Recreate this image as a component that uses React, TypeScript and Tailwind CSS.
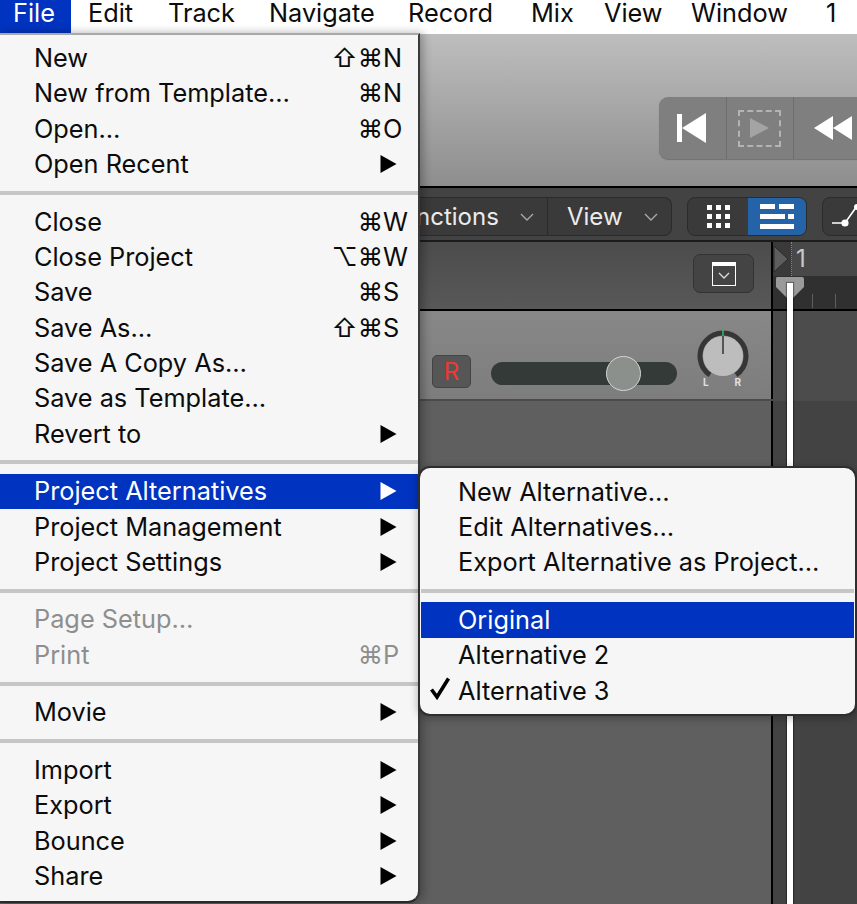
import React from "react";

type Item =
  | { sep: true }
  | { label: string; mods?: string; k?: string; arrow?: boolean; on?: boolean; off?: boolean; check?: boolean };

const menuBar = [
  { label: "File", cls: "w-[71px] bg-[#0033bf] pl-[13px] text-white" },
  { label: "Edit", cls: "w-[80px] pl-[17px]" },
  { label: "Track", cls: "w-[101px] pl-[17px]" },
  { label: "Navigate", cls: "w-[139px] pl-[17px]" },
  { label: "Record", cls: "w-[123px] pl-[17px]" },
  { label: "Mix", cls: "w-[73px] pl-[17px]" },
  { label: "View", cls: "w-[87px] pl-[17px]" },
  { label: "Window", cls: "w-[135px] pl-[17px]" },
  { label: "1", cls: "w-[48px] pl-[17px]" },
];

const fileMenu: Item[] = [
  { label: "New", mods: "⇧⌘", k: "N" },
  { label: "New from Template…", mods: "⌘", k: "N" },
  { label: "Open…", mods: "⌘", k: "O" },
  { label: "Open Recent", arrow: true },
  { sep: true },
  { label: "Close", mods: "⌘", k: "W" },
  { label: "Close Project", mods: "⌥⌘", k: "W" },
  { label: "Save", mods: "⌘", k: "S" },
  { label: "Save As…", mods: "⇧⌘", k: "S" },
  { label: "Save A Copy As…" },
  { label: "Save as Template…" },
  { label: "Revert to", arrow: true },
  { sep: true },
  { label: "Project Alternatives", arrow: true, on: true },
  { label: "Project Management", arrow: true },
  { label: "Project Settings", arrow: true },
  { sep: true },
  { label: "Page Setup…", off: true },
  { label: "Print", mods: "⌘", k: "P", off: true },
  { sep: true },
  { label: "Movie", arrow: true },
  { sep: true },
  { label: "Import", arrow: true },
  { label: "Export", arrow: true },
  { label: "Bounce", arrow: true },
  { label: "Share", arrow: true },
];

const subMenu: Item[] = [
  { label: "New Alternative…" },
  { label: "Edit Alternatives…" },
  { label: "Export Alternative as Project…" },
  { sep: true },
  { label: "Original", on: true },
  { label: "Alternative 2" },
  { label: "Alternative 3", check: true },
];

function Arrow({ white }: { white?: boolean }) {
  return (
    <svg width="17" height="18" viewBox="0 0 17 18" className="mr-[20px] shrink-0">
      <polygon points="0.5,0 16.5,9 0.5,18" fill={white ? "#ffffff" : "#000000"} />
    </svg>
  );
}

function MainRow({ item }: { item: Exclude<Item, { sep: true }> }) {
  const color = item.on ? "bg-[#0033bf] text-white" : item.off ? "text-[#8e8e8e]" : "text-[#0c0c0c]";
  return (
    <div className={`flex h-[35.33px] items-center pl-[34px] pr-[1px] ${color}`}>
      <span className="flex-1 whitespace-nowrap">{item.label}</span>
      {item.k && (
        <span className="flex items-center">
          <span className="whitespace-nowrap">{item.mods}</span>
          <span className="w-[34px]">{item.k}</span>
        </span>
      )}
      {item.arrow && <Arrow white={item.on} />}
    </div>
  );
}

function Separator() {
  return (
    <div className="flex h-[22.27px] items-center">
      <div className="h-[4px] w-full bg-[#c6c6c6]" />
    </div>
  );
}

function SubRow({ item }: { item: Exclude<Item, { sep: true }> }) {
  return (
    <div
      className={`relative flex h-[35.33px] items-center pl-[37px] ${
        item.on ? "bg-[#0033bf] text-white" : "text-[#0c0c0c]"
      }`}
    >
      {item.check && (
        <svg width="22" height="24" viewBox="0 0 22 24" className="absolute left-[8px] top-[3px]">
          <path d="M2.5 13.5 L8 21 L19.5 2.5" fill="none" stroke="#000" strokeWidth="3.6" />
        </svg>
      )}
      <span className="whitespace-nowrap">{item.label}</span>
    </div>
  );
}

function Chevron() {
  return (
    <svg width="14" height="8" viewBox="0 0 14 8">
      <path d="M1 1 L7 7 L13 1" fill="none" stroke="#a8a8a8" strokeWidth="1.4" />
    </svg>
  );
}

function TransportButton({ children, last }: { children: React.ReactNode; last?: boolean }) {
  return (
    <div
      className={`flex shrink-0 items-center ${
        last ? "w-[76px] pl-[20px]" : "w-[67.5px] justify-center border-r border-[#6e6e6e]"
      }`}
    >
      {children}
    </div>
  );
}

export default function App() {
  return (
    <div className="relative h-[904px] w-[857px] overflow-hidden bg-[#5e5e5e] text-[25.3px] [font-family:Inter,'DejaVu_Sans',sans-serif]">
      {/* Menu bar */}
      <div className="flex h-[34px] items-center bg-white text-[#0c0c0c]">
        {menuBar.map((m) => (
          <div
            key={m.label}
            className={`flex h-full shrink-0 items-center whitespace-nowrap pb-[8px] leading-[26px] ${m.cls}`}
          >
            {m.label}
          </div>
        ))}
      </div>

      {/* Application window behind the menus */}
      <div className="ml-[420px] flex h-[870px] flex-col text-white">
        {/* Control bar */}
        <div className="flex h-[154px] shrink-0 items-start overflow-hidden border-b-2 border-black bg-gradient-to-b from-[#bebebe] to-[#8e8e8e] pl-[239px] pt-[63px]">
          <div className="flex h-[62px] w-[240px] shrink-0 rounded-[9px] bg-[#7f7f7f] shadow-[0_1px_1px_rgba(0,0,0,0.25)]">
            <TransportButton>
              <svg width="30" height="30" viewBox="0 0 30 30">
                <rect x="0" y="1" width="5" height="28" fill="#fff" />
                <polygon points="29,0 29,30 5,15" fill="#fff" />
              </svg>
            </TransportButton>
            <TransportButton>
              <div className="flex h-[37px] w-[43px] items-center justify-center border-2 border-dashed border-[#b4b4b4]">
                <svg width="19" height="20" viewBox="0 0 19 20">
                  <polygon points="0,0 19,10 0,20" fill="#a4a4a4" />
                </svg>
              </div>
            </TransportButton>
            <TransportButton last>
              <svg width="38" height="24" viewBox="0 0 38 24" className="shrink-0">
                <polygon points="19,0 19,24 0,12" fill="#fff" />
                <polygon points="38,0 38,24 19,12" fill="#fff" />
              </svg>
            </TransportButton>
          </div>
        </div>

        {/* Tracks toolbar */}
        <div className="flex h-[54px] shrink-0 items-start overflow-hidden border-b-2 border-[#1c1c1c] bg-[#434343] pt-[9px]">
          <div className="flex h-[39px] w-[252px] shrink-0 rounded-r-[8px] border border-l-0 border-[#2b2b2b] bg-[#3a3a3a]">
            <div className="flex w-[128px] items-center border-r border-[#2b2b2b]">
              <span className="ml-[-4px] w-[104px] whitespace-nowrap text-[24px] text-[#ececec]">nctions</span>
              <Chevron />
            </div>
            <div className="flex flex-1 items-center pl-[19px]">
              <span className="w-[77px] text-[24px] text-[#ececec]">View</span>
              <Chevron />
            </div>
          </div>
          <div className="ml-[15px] flex h-[39px] w-[120px] shrink-0 overflow-hidden rounded-[8px] border border-[#2b2b2b] bg-[#3a3a3a]">
            <div className="flex w-[60px] items-center justify-center">
              <svg width="23" height="23" viewBox="0 0 23 23" fill="#fff">
                {[0, 9, 18].map((x) =>
                  [0, 9, 18].map((y) => <rect key={`${x}-${y}`} x={x} y={y} width="5" height="5" />)
                )}
              </svg>
            </div>
            <div className="flex flex-1 items-center justify-center bg-[#2463a8]">
              <svg width="34" height="25" viewBox="0 0 34 25" fill="#fff">
                <rect x="0" y="0" width="15" height="5" />
                <rect x="19" y="0" width="15" height="5" />
                <rect x="0" y="10" width="25" height="5" />
                <rect x="28" y="10" width="6" height="5" />
                <rect x="0" y="20" width="34" height="5" />
              </svg>
            </div>
          </div>
          <div className="ml-[15px] flex h-[39px] w-[60px] shrink-0 items-center rounded-l-[8px] border border-[#2b2b2b] bg-[#3a3a3a] pl-[8px]">
            <svg width="28" height="26" viewBox="0 0 28 26">
              <path d="M1 19 H14 L26 2" fill="none" stroke="#fff" strokeWidth="1.6" />
              <circle cx="14" cy="19" r="3.6" fill="#fff" />
              <circle cx="26" cy="3" r="3" fill="#fff" />
            </svg>
          </div>
        </div>

        {/* Global header row */}
        <div className="flex h-[69px] shrink-0 border-b-2 border-black">
          <div className="flex w-[353px] shrink-0 items-start justify-end border-r-2 border-black bg-gradient-to-b from-[#4c4c4c] to-[#585858] pr-[17px] pt-[12px]">
            <div className="flex h-[39px] w-[61px] items-center justify-center rounded-[7px] border border-[#333] bg-[#444444]">
              <div className="flex h-[24px] w-[24px] items-center justify-center border-x-[1.5px] border-b-[1.5px] border-t-[4px] border-white">
                <svg width="12" height="7" viewBox="0 0 12 7">
                  <path d="M1 1 L6 6 L11 1" fill="none" stroke="#ddd" strokeWidth="1.3" />
                </svg>
              </div>
            </div>
          </div>
          <div className="flex flex-1 flex-col">
            <div className="flex h-[34px] items-center bg-[#484848]">
              <div className="flex h-full w-[19px] shrink-0 items-center border-r border-dotted border-[#888] bg-[#3a3a3a]">
                <svg width="16" height="28" viewBox="0 0 16 28">
                  <polygon points="1,1 15,14 1,27" fill="#5d5d5d" stroke="#2a2a2a" strokeWidth="1" />
                </svg>
              </div>
              <span className="ml-[4px] text-[24px] text-[#c9c9c9]">1</span>
            </div>
            <div className="flex flex-1 items-end gap-[22px] bg-[#303030] pb-[1px] pl-[39px]">
              <div className="h-[14px] w-[1px] bg-[#5f5f5f]" />
              <div className="h-[14px] w-[1px] bg-[#5f5f5f]" />
              <div className="h-[14px] w-[1px] bg-[#5f5f5f]" />
            </div>
          </div>
        </div>

        {/* Track row */}
        <div className="flex h-[90px] shrink-0 border-b-2 border-[#4b4b4b]">
          <div className="flex w-[353px] shrink-0 items-center border-r-2 border-black bg-gradient-to-b from-[#888888] to-[#7d7d7d] pl-[12px]">
            <div className="mt-[33px] flex h-[33px] w-[39px] items-center justify-center rounded-[5px] border border-[#444] bg-[#565656] text-[24px] font-normal leading-none text-[#ee3a33]">
              R
            </div>
            <div className="relative ml-[20px] mt-[36px] h-[23px] w-[186px] rounded-full bg-[#343a37]">
              <div className="absolute left-[115px] top-[-6px] h-[35px] w-[35px] rounded-full border border-[#d6d6d6] bg-[#8b908c]" />
            </div>
            <div className="relative ml-[20px] mt-[11px] flex h-[62px] w-[52px] flex-col items-center">
              <svg width="52" height="52" viewBox="0 0 52 52">
                <path d="M13 45 A 23 23 0 1 1 39 45" fill="none" stroke="#363636" strokeWidth="5" />
                <circle cx="26" cy="26" r="20" fill="#bdbdbd" />
                <line x1="26" y1="0" x2="26" y2="6" stroke="#2fbf63" strokeWidth="1.5" />
                <line x1="26" y1="6" x2="26" y2="24" stroke="#333" strokeWidth="1.5" />
              </svg>
              <div className="absolute left-[6px] top-[47px] flex w-[38px] justify-between text-[10px] font-bold leading-none text-[#e0e0e0]">
                <span>L</span>
                <span>R</span>
              </div>
            </div>
          </div>
          <div className="flex-1 bg-[#4c4c4c]" />
        </div>

        {/* Empty track area */}
        <div className="flex flex-1">
          <div className="w-[353px] shrink-0 border-r-2 border-black bg-[#5f5f5f]" />
          <div className="flex-1 bg-[#434343]" />
        </div>
      </div>

      {/* Playhead */}
      <div className="absolute left-[775px] top-[277px] h-[627px] w-[30px]">
        <svg width="30" height="26" viewBox="0 0 30 26" className="absolute left-0 top-0">
          <path d="M2 0 H27 Q29 0 29 2 V10 L15 24 L1 10 V2 Q1 0 2 0 Z" fill="#9a9a9a" />
        </svg>
        <div className="absolute bottom-0 left-[12px] top-[6px] w-[6px] bg-white shadow-[0_0_1px_1px_rgba(0,0,0,0.35)]" />
      </div>

      {/* File menu */}
      <div className="absolute left-0 top-[33px] z-10 h-[870px] w-[420px] rounded-br-[12px] border-b-2 border-r-2 border-t-2 border-b-[#2a2a2a] border-r-[#3a3a3a] border-t-[#a9a9a9] bg-[#f6f6f6] pt-[5.4px] shadow-[3px_0_10px_rgba(0,0,0,0.3)]">
        {fileMenu.map((item, i) => ("sep" in item ? <Separator key={i} /> : <MainRow key={i} item={item} />))}
      </div>

      {/* Submenu */}
      <div className="absolute left-[418px] top-[466px] z-20 h-[250px] w-[439px] overflow-hidden rounded-[12px] border-2 border-[#2e2e2e] bg-[#f6f6f6] px-[1px] pt-[6px] shadow-[0_2px_8px_rgba(0,0,0,0.3)]">
        {subMenu.map((item, i) => ("sep" in item ? <Separator key={i} /> : <SubRow key={i} item={item} />))}
      </div>
    </div>
  );
}
